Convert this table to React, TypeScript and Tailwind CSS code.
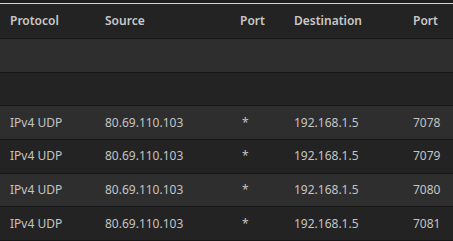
import React from "react";

const rows: (null | { src: string; sport: string; dst: string; dport: string })[] = [
  null,
  null,
  { src: "80.69.110.103", sport: "*", dst: "192.168.1.5", dport: "7078" },
  { src: "80.69.110.103", sport: "*", dst: "192.168.1.5", dport: "7079" },
  { src: "80.69.110.103", sport: "*", dst: "192.168.1.5", dport: "7080" },
  { src: "80.69.110.103", sport: "*", dst: "192.168.1.5", dport: "7081" },
];

export default function App() {
  return (
    <div
      className="w-[453px] h-[241px] overflow-hidden bg-[#1e1e1e] text-[12px]"
      style={{ fontFamily: '"Noto Sans", "Open Sans", sans-serif' }}
    >
      <div className="h-[3px] bg-[#1e1e1e]" />
      <div className="h-[1px] bg-[#d4d4d4]" />
      <div className="flex items-center h-[35px] bg-[#232323] border-b border-[#161616] text-[12px] font-semibold text-[#c9c9c9]">
        <div className="w-[105px] pl-[10px]">Protocol</div>
        <div className="w-[135px]">Source</div>
        <div className="w-[54px]">Port</div>
        <div className="w-[119px]">Destination</div>
        <div className="flex-1">Port</div>
      </div>
      {rows.map((r, i) => (
        <div
          key={i}
          className={`flex items-center h-[33.67px] border-b border-[#161616] text-[#c4c4c4] ${
            i % 2 === 0 ? "bg-[#2e2e2e]" : "bg-[#232323]"
          }`}
        >
          {r && (
            <>
              <div className="w-[105px] pl-[10px]">IPv4 UDP</div>
              <div className="w-[135px]">{r.src}</div>
              <div className="w-[54px] pl-[2px]">{r.sport}</div>
              <div className="w-[119px]">{r.dst}</div>
              <div className="flex-1">{r.dport}</div>
            </>
          )}
        </div>
      ))}
    </div>
  );
}
